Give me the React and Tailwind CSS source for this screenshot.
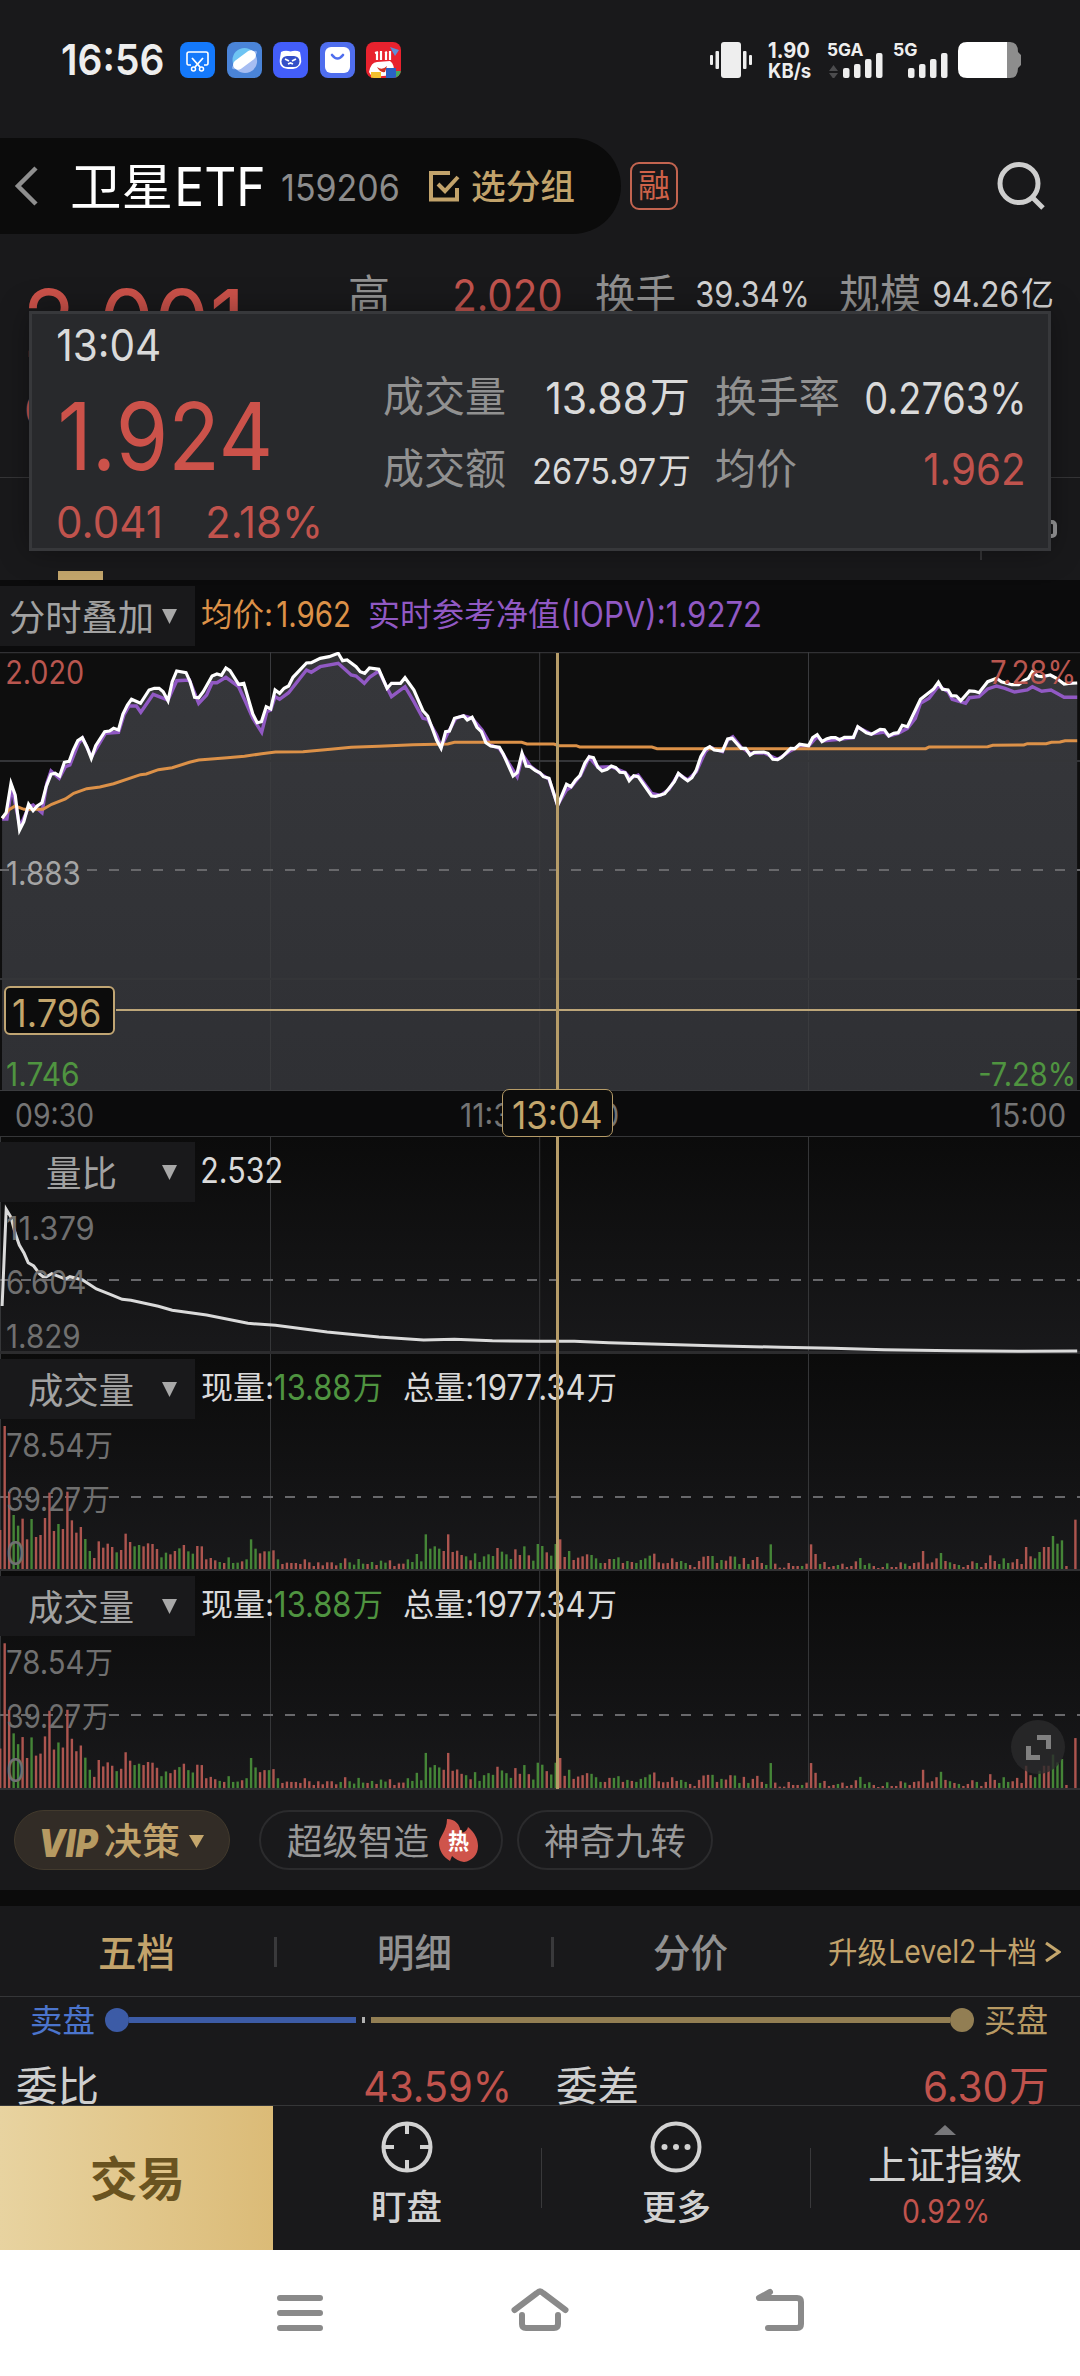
import React, { useLayoutEffect, useRef } from "react";

/* Text whose visible glyphs are stretched to exactly fill the width of its box. */
function Fit({ className = "", children }) {
  const box = useRef(null);
  const inner = useRef(null);
  useLayoutEffect(() => {
    const ctx = document.createElement("canvas").getContext("2d");
    ctx.font = getComputedStyle(inner.current).font;
    const m = ctx.measureText(inner.current.textContent);
    const ink = m.actualBoundingBoxLeft + m.actualBoundingBoxRight;
    const s = box.current.offsetWidth / ink;
    inner.current.style.transform = `translateX(${m.actualBoundingBoxLeft * s}px) scaleX(${s})`;
  }, [children]);
  return (
    <span ref={box} className={"block shrink-0 whitespace-nowrap leading-none " + className}>
      <span ref={inner} className="inline-block origin-left leading-none align-top">{children}</span>
    </span>
  );
}

const SX = 2.904;
const toPath = (left, right) => {
  const conv = (str, off) =>
    str.trim().split(/\s+/).map((p) => {
      const [x, y] = p.split(",").map(Number);
      return `${(off + x / SX).toFixed(1)},${(y / 3).toFixed(1)}`;
    });
  return [...conv(left, 0), ...conv(right, 540)].join(" ");
};

const PRICE = toPath(
  "6,535 18,518 32,430 44,465 57,570 69,545 83,493 96,512 108,498 122,488 134,440 148,403 160,400 173,408 187,367 201,364 213,330 226,302 239,293 252,320 265,355 278,317 304,275 318,273 330,265 344,270 357,222 370,195 382,178 408,190 433,150 448,145 462,145 474,155 488,182 500,125 513,93 540,98 552,125 565,172 577,173 590,155 616,108 630,102 643,106 656,84 668,92 693,133 708,130 734,222 747,248 759,245 773,200 786,207 799,150 812,160 825,145 838,138 851,112 890,69 904,68 930,55 956,50 982,40 995,62 1008,60 1034,80 1046,95 1059,100 1073,84 1100,88 1124,145 1137,130 1163,130 1176,113 1202,150 1228,212 1242,228 1268,300 1281,325 1294,275 1305,273 1320,235 1346,227 1357,240 1371,232 1385,262 1398,275 1411,308 1425,318 1450,322 1462,343 1490,408 1502,398 1516,340 1528,378 1540,380 1555,392",
  "0,398 10,410 26,415 51,497 77,433 90,440 103,420 116,407 130,370 143,350 155,353 168,382 180,393 195,388 207,378 220,383 232,397 247,398 259,422 272,407 285,410 324,468 336,469 350,465 362,461 375,445 390,425 402,400 415,412 429,422 441,413 454,390 467,350 480,328 493,320 506,330 530,333 545,297 558,295 584,325 597,325 610,345 622,337 650,336 662,340 676,358 690,359 702,352 728,325 740,326 754,313 780,317 792,293 805,284 819,305 832,297 845,293 858,293 870,300 884,292 910,292 923,260 948,278 962,283 988,268 1000,269 1013,288 1027,280 1040,278 1052,256 1067,260 1105,178 1143,147 1157,127 1169,148 1185,150 1195,167 1209,168 1222,182 1247,153 1262,154 1275,158 1300,125 1326,115 1340,125 1370,134 1390,134 1405,122 1418,115 1430,95 1445,108 1458,110 1482,105 1500,115 1522,132 1535,130 1560,129"
);
const IOPV = toPath(
  "6,537 20,537 34,440 58,560 84,500 96,495 122,518 136,430 148,393 172,415 190,380 203,375 228,310 240,295 266,350 306,280 344,277 360,225 375,198 396,198 409,217 445,163 488,180 513,122 550,120 577,190 600,165 616,128 630,128 656,112 693,140 715,190 734,235 760,277 775,215 786,210 799,170 812,178 838,158 890,90 904,97 930,80 982,70 1020,105 1034,108 1058,130 1073,112 1100,93 1137,170 1176,140 1202,185 1228,235 1242,238 1268,285 1281,320 1300,280 1324,235 1346,227 1371,235 1400,270 1425,315 1450,325 1502,410 1518,345 1540,378",
  "0,400 26,418 51,495 77,450 90,442 118,405 143,352 168,382 207,380 247,397 262,415 285,405 324,460 350,466 375,448 402,402 429,420 454,395 480,335 493,322 530,335 545,300 560,290 584,322 610,340 650,338 690,358 728,332 754,318 780,318 805,290 819,303 870,298 910,293 923,262 962,282 1000,276 1013,288 1040,280 1067,265 1090,235 1105,190 1130,175 1157,138 1185,155 1197,178 1236,190 1247,173 1275,170 1300,147 1326,138 1350,145 1378,156 1415,150 1430,140 1457,154 1484,150 1522,172 1560,172"
);
const AVG = toPath(
  "6,535 25,510 44,498 70,508 125,508 150,493 190,477 214,460 252,446 290,441 330,431 408,404 425,402 460,389 500,383 550,367 577,360 605,358 660,353 710,349 760,341 800,336 880,335 960,328 1020,322 1100,319 1200,314 1300,312 1320,307 1515,307 1530,312",
  "0,312 40,312 55,317 105,317 115,321 325,321 340,326 1120,326 1130,321 1300,320 1315,316 1405,315 1415,311 1470,311 1485,307 1510,306 1525,302 1560,302"
);
const RATIO = toPath(
  "6,528 18,238 32,262 44,310 56,345 70,370 82,398 98,408 115,432 125,440 135,440 150,431 165,437 190,447 203,440 240,450 280,477 320,493 355,508 380,511 460,529 500,541 600,555 720,580 800,586 950,606 1100,621 1230,630 1320,628 1430,632",
  "0,634 100,634 200,638 300,641 400,644 500,647 700,652 850,655 1000,659 1200,662 1400,664 1560,663"
);
/* Minute volumes; a negative value is a falling minute. */
const VOLUME = [
  117,429,232,-162,-130,151,89,-150,96,102,153,229,114,-135,120,232,146,109,126,-90,-54,33,83,64,76,66,-50,57,106,81,-68,-72,68,77,75,60,-35,-49,44,54,-62,72,-53,-46,69,68,29,33,26,-21,18,-35,-18,-19,23,-29,-89,-61,47,53,-53,56,-29,15,19,18,18,15,29,20,9,20,11,20,20,11,-18,32,-20,-13,-30,-16,15,-21,12,-25,-19,26,9,16,16,-29,-21,-45,-23,-104,-61,-68,-61,54,104,51,55,42,-38,26,-47,-21,-38,-44,-39,63,-52,-44,-30,59,42,-68,41,-25,-75,
  -69,50,-40,-75,89,36,-54,27,34,38,44,-42,-32,-18,18,30,-30,-35,18,-24,21,-18,-27,-32,-40,46,20,17,18,32,21,-24,-18,12,6,24,37,39,-39,18,-27,25,38,-37,-15,33,-15,27,36,18,-12,-74,16,4,4,18,9,9,-9,16,74,45,-15,21,6,9,-12,16,6,9,23,-33,-12,-17,9,3,6,-17,6,6,20,-16,9,18,20,54,16,20,32,-48,24,-20,15,-12,6,12,23,-18,6,18,41,24,-15,-32,-18,20,30,15,66,38,-32,-51,66,66,-99,-76,-86,9,0,148,
];

function StatusBar() {
  return (
    <div className="flex h-[138px] items-start pt-[42px]">
      <Fit className="ml-[62px] mt-[-4px] w-[101px] text-[43px] font-semibold text-[#eeeeee]">16:56</Fit>
      <div className="ml-[17px] flex gap-[11.5px]">
        <svg width="35" height="36" viewBox="0 0 35 36">
          <rect width="35" height="36" rx="8" fill="#1479fb" />
          <path d="M11 23H8.500Q7 23 7 21V12Q7 10 9 10H26Q28 10 28 12V21Q28 23 26.500 23H24" fill="none" stroke="#fff" strokeWidth="1.600" />
          <path d="M12 16L20 25M23 16L15 25" stroke="#fff" strokeWidth="1.800" />
          <circle cx="13.500" cy="27" r="2" fill="none" stroke="#fff" strokeWidth="1.500" />
          <circle cx="21.500" cy="27" r="2" fill="none" stroke="#fff" strokeWidth="1.500" />
        </svg>
        <svg width="35" height="36" viewBox="0 0 35 36">
          <rect width="35" height="36" rx="8" fill="#4a84d8" />
          <circle cx="17.500" cy="18" r="12" fill="#6ec4f3" />
          <path d="M7 24A12 12 0 0 0 29 14Z" fill="#a6bdf2" />
          <ellipse cx="17.500" cy="18" rx="15" ry="4" fill="#8db1ee" transform="rotate(-35 17.500 18)" />
          <rect x="4.500" y="13" width="26" height="10" rx="5" fill="#fff" transform="rotate(-37 17.500 18)" />
        </svg>
        <svg width="35" height="36" viewBox="0 0 35 36">
          <rect width="35" height="36" rx="8" fill="#435efa" />
          <path d="M8 10Q12 8 17.500 9.500Q23 8 27 10L28 16Q30 25 20 27H15Q5 26 7 16Z" fill="#fff" />
          <rect x="8.500" y="14" width="18" height="11" rx="5.500" fill="#3550c8" />
          <path d="M12 17L16 19M23 17L19 19M15 22L17.500 21L20 22" stroke="#fff" strokeWidth="1.800" fill="none" />
        </svg>
        <svg width="35" height="36" viewBox="0 0 35 36">
          <rect width="35" height="36" rx="8" fill="#4f6eee" />
          <rect x="5" y="5" width="25" height="26" rx="6" fill="#fff" />
          <path d="M12 13Q17.500 20 23 13" fill="none" stroke="#4f6eee" strokeWidth="2.600" strokeLinecap="round" />
        </svg>
        <svg width="35" height="36" viewBox="0 0 35 36">
          <defs><clipPath id="promo"><rect width="35" height="36" rx="8" /></clipPath></defs>
          <g clipPath="url(#promo)">
            <rect width="35" height="36" fill="#e8222e" />
            <path d="M24 5L33 8L29 14Z" fill="#5b8fd8" />
            <path d="M11 10V18M15 9V18M20 10V18M24 9V18M9 11L12 10M19 11L21 10" stroke="#fff" strokeWidth="2.200" />
            <path d="M3 30Q5 20 11 20L24 19Q29 22 28 33L6 35Z" fill="#fff" />
            <path d="M11 25Q16 29 21 24L19 30Q14 31 11 25Z" fill="#d03325" />
            <rect x="5" y="30" width="10" height="8" fill="#f2c12e" />
            <rect x="20" y="26" width="10" height="11" fill="#2b62c4" />
            <rect x="30" y="29" width="5" height="8" fill="#48a860" />
          </g>
        </svg>
      </div>
      <svg className="ml-[309px]" width="42" height="37" viewBox="0 0 42 37" fill="#eeeeee">
        <rect x="11" width="20" height="36" rx="3" />
        <rect x="0" y="13" width="3" height="10" rx="1" /><rect x="5.500" y="9" width="3.500" height="18" rx="1" />
        <rect x="33" y="9" width="3.500" height="18" rx="1" /><rect x="39" y="13" width="3" height="10" rx="1" />
      </svg>
      <div className="ml-[16px] mt-[-3px] w-[43px] font-bold text-[#eeeeee]">
        <Fit className="w-[41px] text-[22px]">1.90</Fit>
        <Fit className="ml-[1px] w-[42px] text-[20px]">KB/s</Fit>
      </div>
      <div className="relative ml-[17px] h-[36px] w-[55px]">
        <Fit className="absolute left-0 top-[-1px] w-[35px] text-[18px] font-bold text-[#eeeeee]">5GA</Fit>
        <svg width="55" height="36" viewBox="0 0 55 36" fill="#eeeeee">
          <path d="M1 29L5.500 23L10 29ZM1 31L5.500 37L10 31Z" fill="#4c4c4e" />
          <rect x="15" y="26" width="6.500" height="10" rx="2" /><rect x="26" y="22" width="6.500" height="14" rx="2" />
          <rect x="37" y="17" width="6.500" height="19" rx="2" /><rect x="48" y="11" width="6.500" height="25" rx="2" />
        </svg>
      </div>
      <div className="relative ml-[10px] h-[36px] w-[55px]">
        <Fit className="absolute left-[1px] top-[-1px] w-[23px] text-[18px] font-bold text-[#eeeeee]">5G</Fit>
        <svg width="55" height="36" viewBox="0 0 55 36" fill="#eeeeee">
          <rect x="15" y="26" width="6.500" height="10" rx="2" /><rect x="26" y="22" width="6.500" height="14" rx="2" />
          <rect x="37" y="17" width="6.500" height="19" rx="2" /><rect x="48" y="11" width="6.500" height="25" rx="2" />
        </svg>
      </div>
      <svg className="ml-[10px]" width="63" height="36" viewBox="0 0 63 36">
        <path d="M49 0H52Q60 0 60 10L63 13V23L60 26Q60 36 52 36H49Z" fill="#8d8d8d" />
        <path d="M9 0H49V36H9Q0 36 0 27V9Q0 0 9 0Z" fill="#fff" />
      </svg>
    </div>
  );
}

function TitleBar() {
  return (
    <div className="flex h-[96px] items-center">
      <div className="flex h-[96px] w-[621px] items-center rounded-r-full bg-[#0b0b0b]">
        <svg className="ml-[14px]" width="26" height="42" viewBox="0 0 26 42"><path d="M22 3L4 21L22 39" fill="none" stroke="#8f8f8f" strokeWidth="4.500" /></svg>
        <Fit className="ml-[32px] mt-[2px] w-[98px] text-[50px] text-white">卫星</Fit>
        <Fit className="ml-[8px] mt-[2px] w-[85px] text-[54px] text-white">ETF</Fit>
        <Fit className="ml-[19px] mt-[2px] w-[116px] text-[37px] text-[#8c8c8c]">159206</Fit>
        <svg className="ml-[31px]" width="31" height="31" viewBox="0 0 31 31" fill="none" stroke="#c2a36b" strokeWidth="4">
          <path d="M21 2H2V28.500H28V17" /><path d="M9 13L16 20L29 6" />
        </svg>
        <Fit className="ml-[12px] mt-[1px] w-[102px] text-[34px] font-medium text-[#c2a36b]">选分组</Fit>
      </div>
      <div className="ml-[9px] flex h-[48px] w-[48px] items-center justify-center rounded-[9px] border-2 border-[#c26450]">
        <Fit className="w-[30px] text-[32px] text-[#cf6249]">融</Fit>
      </div>
      <svg className="ml-[319px]" width="50" height="50" viewBox="0 0 50 50" fill="none" stroke="#cecece" strokeWidth="5">
        <circle cx="22" cy="22.500" r="19" /><path d="M35 36L46 47" />
      </svg>
    </div>
  );
}

function Quote() {
  return (
    <div className="relative h-[346px] overflow-hidden bg-[#19191b] text-[42px]">
      <div className="flex h-[122px] items-center">
        <div className="h-[84px] w-[322px] pt-[28px]">
          <Fit className="ml-[28px] mt-[-4px] w-[210px] text-[93px] text-[#cc524a]">2.001</Fit>
        </div>
        <Fit className="ml-[28px] w-[38px] text-[#919191]">高</Fit>
        <Fit className="ml-[67px] w-[106px] text-[44px] text-[#c0534d]">2.020</Fit>
        <Fit className="ml-[35px] w-[79px] text-[#919191]">换手</Fit>
        <Fit className="ml-[22px] mt-[-2px] w-[110px] text-[36px] text-[#d4d4d4]">39.34%</Fit>
        <Fit className="ml-[33px] w-[80px] text-[#919191]">规模</Fit>
        <Fit className="ml-[14px] mt-[-2px] w-[84px] text-[36px] text-[#d4d4d4]">94.26</Fit>
        <Fit className="ml-[4px] mt-[-2px] w-[30px] text-[33px] text-[#d4d4d4]">亿</Fit>
      </div>
      <Fit className="ml-[26px] mt-[32px] w-[102px] text-[44px] text-[#c0534d]">0.118</Fit>
      <div className="mt-[45px] h-px bg-[#353537]" />
      <div className="flex h-[102px] justify-between">
        <div className="ml-[58px] mt-auto h-[9px] w-[45px] bg-[#c4a66c]" />
        <div className="flex h-[82px] w-[100px] items-start border-l-2 border-[#353537]">
          <div className="ml-[47px] mt-[42px] h-[18px] w-[28px] rounded-[5px] border-4 border-[#99999b]" />
        </div>
      </div>
    </div>
  );
}

function Tooltip() {
  return (
    <div className="absolute left-[29px] top-[311px] flex h-[240px] w-[1022px] border-[3px] border-[#37383b] bg-[#28292c] text-[42px] shadow-[0_0_28px_rgba(0,0,0,0.35)]">
      <div className="ml-[26px] w-[290px]">
        <Fit className="mt-[9px] w-[101px] text-[44px] text-[#dadada]">13:04</Fit>
        <Fit className="ml-[3px] mt-[22px] w-[208px] text-[94px] text-[#cc524a]">1.924</Fit>
        <div className="mt-[17px] flex">
          <Fit className="w-[102px] text-[44px] text-[#c0534d]">0.041</Fit>
          <Fit className="ml-[48px] w-[111px] text-[44px] text-[#c0534d]">2.18%</Fit>
        </div>
      </div>
      <div className="ml-[36px] mt-[47px] w-[640px]">
        <div className="flex h-[72px] items-center">
          <Fit className="w-[121px] text-[#919191]">成交量</Fit>
          <Fit className="ml-[42px] mt-[2px] w-[99px] text-[44px] text-[#dadada]">13.88</Fit>
          <Fit className="ml-[5px] w-[37px] text-[42px] text-[#dadada]">万</Fit>
          <Fit className="ml-[28px] w-[122px] text-[#919191]">换手率</Fit>
          <Fit className="ml-[28px] mt-[2px] w-[157px] text-[44px] text-[#dadada]">0.2763%</Fit>
        </div>
        <div className="flex h-[72px] items-center">
          <Fit className="w-[121px] text-[#919191]">成交额</Fit>
          <Fit className="ml-[29px] mt-[4px] w-[121px] text-[36px] text-[#dadada]">2675.97</Fit>
          <Fit className="ml-[4px] mt-[4px] w-[30px] text-[34px] text-[#dadada]">万</Fit>
          <Fit className="ml-[27px] w-[80px] text-[#919191]">均价</Fit>
          <Fit className="ml-[129px] w-[98px] text-[44px] text-[#c0534d]">1.962</Fit>
        </div>
      </div>
    </div>
  );
}

function Selector({ pad, children }) {
  return (
    <div className="flex h-[60px] w-[195px] shrink-0 items-center justify-between bg-[#19191b] pr-[18px] pt-[1px] text-[36px] text-[#a2a2a2]">
      <div className={pad}>{children}</div>
      <svg width="15" height="15" viewBox="0 0 15 15" fill="#a8a8a8"><path d="M0 0H15L7.500 15Z" /></svg>
    </div>
  );
}

const vline = (h) => (
  <g stroke="#353638" strokeWidth="1">
    <path d={`M0.500 0V${h}M270.500 0V${h}M539.700 0V${h}M808.500 0V${h}`} />
  </g>
);

function PriceChart() {
  return (
    <div className="relative h-[439px]">
      <svg className="block" width="1080" height="439" viewBox="0 12 1080 439">
        <defs>
          <linearGradient id="area" x1="0" y1="0" x2="0" y2="1"><stop offset="0" stopColor="#36373b" /><stop offset="1" stopColor="#2f3034" /></linearGradient>
        </defs>
        <rect y="12" width="1080" height="439" fill="#0e0e0e" />
        <polygon points={`2,450 ${PRICE} 1077,450`} fill="url(#area)" />
        <g stroke="#3a3b3e" strokeWidth="1">
          <path d="M0 12.700H1080M270.500 12V451M539.700 12V451M808.500 12V451M0 450.500H1080" />
          <path d="M0 121H1080M0 339H1080" stroke="#343538" strokeWidth="2" />
        </g>
        <path d="M-1 230H1080" stroke="#68686b" strokeWidth="2" strokeDasharray="10 12" />
        <polyline points={IOPV} fill="none" stroke="#9159c4" strokeWidth="3.400" />
        <polyline points={AVG} fill="none" stroke="#dc9148" strokeWidth="3" />
        <polyline points={PRICE} fill="none" stroke="#fff" strokeWidth="3.200" />
        <path d="M116 370H1080" stroke="#bda679" strokeWidth="2" />
      </svg>
      <Fit className="absolute left-[7px] top-[5px] w-[76px] text-[32px] text-[#b9564f]">2.020</Fit>
      <Fit className="absolute left-[7px] top-[206px] w-[72px] text-[32px] text-[#a5a5a5]">1.883</Fit>
      <Fit className="absolute left-[7px] top-[407px] w-[71px] text-[32px] text-[#4f9440]">1.746</Fit>
      <Fit className="absolute left-[991px] top-[5px] w-[82px] text-[32px] text-[#b9564f]">7.28%</Fit>
      <Fit className="absolute left-[980px] top-[407px] w-[93px] text-[32px] text-[#4f9440]">-7.28%</Fit>
      <div className="absolute left-[4px] top-[334px] flex h-[49px] w-[111px] items-center rounded-[6px] border-[2.5px] border-[#c0a573] bg-[#0c0c0c] pl-[7px] pt-[5px]">
        <Fit className="w-[87px] text-[38px] text-[#c4a66c]">1.796</Fit>
      </div>
    </div>
  );
}

function RatioPanel() {
  return (
    <div className="relative h-[217px] bg-gradient-to-b from-[#0b0b0b] to-[#19191b]">
      <svg className="absolute inset-0" width="1080" height="217">
        {vline(217)}
        <path d="M-1 143H1080" stroke="#68686b" strokeWidth="2" strokeDasharray="10 12" />
        <path d="M0 215.500H1080" stroke="#2c2c2e" strokeWidth="3" />
        <polyline points={RATIO} transform="translate(0 -7)" fill="none" stroke="#dadada" strokeWidth="3" />
      </svg>
      <div className="relative flex pt-[5px]">
        <Selector pad="pl-[47px] pt-[3px]"><Fit className="w-[68px]">量比</Fit></Selector>
        <Fit className="ml-[7px] mt-[11px] w-[79px] text-[35px] text-[#dadada]">2.532</Fit>
      </div>
      <div className="relative ml-[7px] mt-[11px] text-[32px] text-[#707070]">
        <Fit className="w-[86px]">11.379</Fit>
        <Fit className="mt-[22px] w-[78px]">6.604</Fit>
        <Fit className="mt-[22px] w-[72px]">1.829</Fit>
      </div>
    </div>
  );
}

function VolumePanel({ tall }) {
  const base = tall ? 217 : 215;
  const k = (tall ? 1.012 : 1) / 3;
  return (
    <div className={(tall ? "h-[219px]" : "h-[217px]") + " relative bg-gradient-to-b from-[#0b0b0b] to-[#19191b]"}>
      <svg className="absolute inset-0" width="1080" height="219">
        {vline(tall ? 219 : 217)}
        <path d={tall ? "M-1 144H1080" : "M-1 143H1080"} stroke="#68686b" strokeWidth="2" strokeDasharray="10 12" />
        <path d={`M0 ${base + 1}H1080`} stroke="#303032" strokeWidth="2" />
        {VOLUME.map((v, i) => (
          <rect key={i} x={4.48 * i - 1} y={base - Math.abs(v) * k} width="2.400" height={Math.abs(v) * k} fill={v < 0 ? "#458537" : "#ad554f"} />
        ))}
      </svg>
      <div className="relative flex pt-[5px] text-[#dadada]">
        <Selector pad="pl-[29px] pt-[3px]"><Fit className="w-[104px]">成交量</Fit></Selector>
        <div className="flex h-[57px] items-center text-[35px]">
          <Fit className="ml-[7px] w-[70px] text-[32px]">现量:</Fit>
          <Fit className="ml-[3px] w-[75px] text-[#4f9440]">13.88</Fit>
          <Fit className="ml-[4px] w-[28px] text-[32px] text-[#4f9440]">万</Fit>
          <Fit className="ml-[22px] w-[68px] text-[32px]">总量:</Fit>
          <Fit className="ml-[4px] w-[108px]">1977.34</Fit>
          <Fit className="ml-[4px] w-[28px] text-[32px]">万</Fit>
        </div>
      </div>
      <div className="relative ml-[7px] mt-[11px] text-[32px] text-[#707070]">
        <div className="flex"><Fit className="w-[76px]">78.54</Fit><Fit className="ml-[3px] w-[26px] text-[30px]">万</Fit></div>
        <div className="mt-[22px] flex"><Fit className="w-[73px]">39.27</Fit><Fit className="ml-[3px] w-[26px] text-[30px]">万</Fit></div>
        <Fit className="mt-[22px] w-[17px]">0</Fit>
      </div>
    </div>
  );
}

function Charts() {
  return (
    <div className="relative h-[1210px] bg-[#0b0b0c]">
      <div className="flex h-[72px] pt-[6px]">
        <Selector pad="pl-[10px] pt-[2px]"><Fit className="w-[141px]">分时叠加</Fit></Selector>
        <div className="flex h-[57px] items-center text-[35px] text-[#dc9148]">
          <Fit className="ml-[7px] w-[69px] text-[32px]">均价:</Fit>
          <Fit className="ml-[6px] w-[72px]">1.962</Fit>
          <Fit className="ml-[21px] w-[189px] text-[32px] text-[#9159c4]">实时参考净值</Fit>
          <Fit className="ml-[4px] w-[197px] text-[#9159c4]">(IOPV):1.9272</Fit>
        </div>
      </div>
      <PriceChart />
      <div className="flex h-[46px] items-center border-b border-[#353638] pt-[4px] text-[32px] text-[#747474]">
        <Fit className="ml-[16px] w-[77px]">09:30</Fit>
        <Fit className="ml-[368px] w-[157px]">11:30/13:00</Fit>
        <Fit className="ml-[373px] w-[74px]">15:00</Fit>
      </div>
      <RatioPanel />
      <VolumePanel />
      <VolumePanel tall />
      <div className="absolute left-[556px] top-[73px] h-[1136px] w-[2.5px] bg-[#b69c68]" />
      <div className="absolute left-[502px] top-[509px] flex h-[48px] w-[111px] items-center rounded-[7px] border-[1.5px] border-[#b69c68] bg-[#0c0c0c] pl-[10px] pt-[3px]">
        <Fit className="w-[88px] text-[38px] text-[#c4a66c]">13:04</Fit>
      </div>
      <div className="absolute left-[1011px] top-[1140px] flex h-[54px] w-[54px] items-center justify-center rounded-full bg-[#2b2b2c]/80">
        <svg width="25" height="25" viewBox="0 0 25 25" fill="none" stroke="#808080" strokeWidth="5"><path d="M11 2.500H22.500V14M2.500 11V22.500H14" /></svg>
      </div>
    </div>
  );
}

function Pills() {
  return (
    <div className="flex h-[100px] items-center">
      <div className="ml-[14px] flex h-[60px] w-[216px] items-center rounded-full border border-[#423a2d] bg-[#322c26] text-[#c2a36b]">
        <Fit className="ml-[26px] mt-[4px] w-[58px] text-[39px] font-black italic text-[#b69a62]">VIP</Fit>
        <Fit className="ml-[6px] mt-[3px] w-[74px] text-[37px] font-medium">决策</Fit>
        <svg className="ml-[10px] mt-[3px]" width="15" height="13" viewBox="0 0 15 13" fill="#c4a66c"><path d="M0 0H15L7.500 13Z" /></svg>
      </div>
      <div className="ml-[29px] flex h-[60px] w-[244px] items-center rounded-full border-2 border-[#2b2b2d] text-[#999]">
        <Fit className="ml-[26px] mt-[4px] w-[141px] text-[36px]">超级智造</Fit>
        <div className="relative ml-[11px] h-[43px] w-[39px]">
          <svg width="39" height="43" viewBox="0 0 39 43" fill="#cf544b"><path d="M8 0C16 0 21 5 22 14Q28 13 29 8C36 14 39 20 39 27C39 36 33 42 25 43Q18 42 13 37L11 42C4 38 0 31 0 24C0 18 8 12 8 0Z" /></svg>
          <Fit className="absolute left-[9px] top-[11px] w-[21px] text-[22px] font-bold text-white">热</Fit>
        </div>
      </div>
      <div className="ml-[14px] flex h-[60px] w-[196px] items-center justify-center rounded-full border-2 border-[#2b2b2d] pt-[3px] text-[#999]">
        <Fit className="w-[140px] text-[36px]">神奇九转</Fit>
      </div>
    </div>
  );
}

function OrderBook() {
  return (
    <div className="h-[200px]">
      <div className="flex h-[91px] items-center border-b border-[#353638] pt-[2px] text-[39px] font-medium text-[#919191]">
        <Fit className="ml-[100px] w-[73px] text-[#c2a36b]">五档</Fit>
        <div className="ml-[101px] h-[30px] w-[3px] bg-[#39393b]" />
        <Fit className="ml-[102px] w-[71px]">明细</Fit>
        <div className="ml-[101px] h-[30px] w-[3px] bg-[#39393b]" />
        <Fit className="ml-[100px] w-[74px]">分价</Fit>
        <div className="flex items-center text-[30px] font-normal text-[#c2a36b]">
          <Fit className="ml-[101px] w-[57px]">升级</Fit>
          <Fit className="ml-[4px] w-[85px] text-[32px]">Level2</Fit>
          <Fit className="ml-[4px] w-[56px]">十档</Fit>
          <svg className="ml-[10px]" width="16" height="22" viewBox="0 0 16 22"><path d="M1 2L14 11L1 20" fill="none" stroke="#c4a66c" strokeWidth="3" /></svg>
        </div>
      </div>
      <div className="flex h-[46px] items-center text-[32px]">
        <Fit className="ml-[32px] mt-[1px] w-[62px] text-[#4b74cc]">卖盘</Fit>
        <div className="ml-[11px] h-[24px] w-[24px] rounded-full bg-[#3c5ba6]" />
        <div className="h-[6px] w-[227px] bg-[#3c5ba6]" />
        <div className="ml-[6px] h-[6px] w-[3px] bg-[#b0b0b0]" />
        <div className="ml-[6px] h-[6px] w-[579px] bg-[#927e53]" />
        <div className="h-[24px] w-[24px] rounded-full bg-[#927e53]" />
        <Fit className="ml-[11px] mt-[1px] w-[62px] text-[#b89a63]">买盘</Fit>
      </div>
      <div className="flex pt-[23px] text-[41px] text-[#cfcfcf]">
        <Fit className="ml-[17px] w-[80px]">委比</Fit>
        <Fit className="ml-[268px] mt-[-1px] w-[143px] text-[43px] text-[#c0534d]">43.59%</Fit>
        <Fit className="ml-[49px] w-[80px]">委差</Fit>
        <Fit className="ml-[288px] mt-[-1px] w-[81px] text-[43px] text-[#c0534d]">6.30</Fit>
        <Fit className="ml-[4px] w-[37px] text-[#c0534d]">万</Fit>
      </div>
    </div>
  );
}

function BottomBar() {
  return (
    <div className="flex h-[144px] text-[#d2d2d2]">
      <div className="flex w-[273px] items-center justify-center bg-gradient-to-r from-[#e8d3a0] to-[#dbbb77]">
        <Fit className="w-[90px] text-[47px] font-bold text-[#695320]">交易</Fit>
      </div>
      <div className="flex w-[268px] flex-col items-center pt-[15px]">
        <svg width="52" height="52" viewBox="0 0 52 52" fill="none" stroke="#d2d2d2" strokeWidth="4"><circle cx="26" cy="26" r="23.500" /><path d="M26 2V13M26 39V50M2 26H13M39 26H50" /></svg>
        <Fit className="mt-[17px] w-[68px] text-[35px] font-medium">盯盘</Fit>
      </div>
      <div className="my-auto h-[60px] w-px bg-[#39393b]" />
      <div className="flex w-[268px] flex-col items-center pt-[15px]">
        <svg width="52" height="52" viewBox="0 0 52 52" fill="none" stroke="#d2d2d2" strokeWidth="4">
          <circle cx="26" cy="26" r="23.500" />
          <g fill="#d2d2d2" stroke="none"><circle cx="14.500" cy="26" r="3" /><circle cx="26" cy="26" r="3" /><circle cx="37.500" cy="26" r="3" /></g>
        </svg>
        <Fit className="mt-[17px] w-[67px] text-[35px] font-medium">更多</Fit>
      </div>
      <div className="my-auto h-[60px] w-px bg-[#39393b]" />
      <div className="flex w-[268px] flex-col items-center pt-[19px]">
        <svg width="22" height="10" viewBox="0 0 22 10" fill="#77777a"><path d="M0 10L11 0L22 10Z" /></svg>
        <Fit className="mt-[10px] w-[152px] text-[39px]">上证指数</Fit>
        <Fit className="mt-[12px] w-[84px] text-[32px] text-[#c0534d]">0.92%</Fit>
      </div>
    </div>
  );
}

function SystemNav() {
  return (
    <div className="flex h-[126px] items-start bg-white pt-[36px]">
      <svg className="ml-[274px]" width="52" height="52" viewBox="0 0 52 52" stroke="#8a8a8a" strokeWidth="6" strokeLinecap="round"><path d="M6 12H46M6 27H46M6 42H46" /></svg>
      <svg className="ml-[184px]" width="60" height="52" viewBox="0 0 60 52" fill="none" stroke="#8a8a8a" strokeWidth="6" strokeLinecap="round" strokeLinejoin="round">
        <path d="M4.500 24L27 7Q30 4 33 7L55.500 24" /><path d="M12 29V38Q12 42 16 42H44Q48 42 48 38V29" />
      </svg>
      <svg className="ml-[184px]" width="54" height="52" viewBox="0 0 54 52" fill="none" stroke="#8a8a8a" strokeWidth="6" strokeLinecap="round" strokeLinejoin="round">
        <path d="M16 6L5 12H43Q47 12 47 16V38Q47 42 43 42H14" />
      </svg>
    </div>
  );
}

export default function App() {
  return (
    <div className="relative h-[2376px] w-[1080px] overflow-hidden bg-[#19191b] font-['Inter','Noto_Sans_CJK_SC',sans-serif]">
      <StatusBar />
      <TitleBar />
      <Quote />
      <Charts />
      <Pills />
      <div className="h-[16px] bg-[#0b0b0b]" />
      <div className="h-[200px] border-b border-[#353638]"><OrderBook /></div>
      <BottomBar />
      <SystemNav />
      <Tooltip />
    </div>
  );
}
